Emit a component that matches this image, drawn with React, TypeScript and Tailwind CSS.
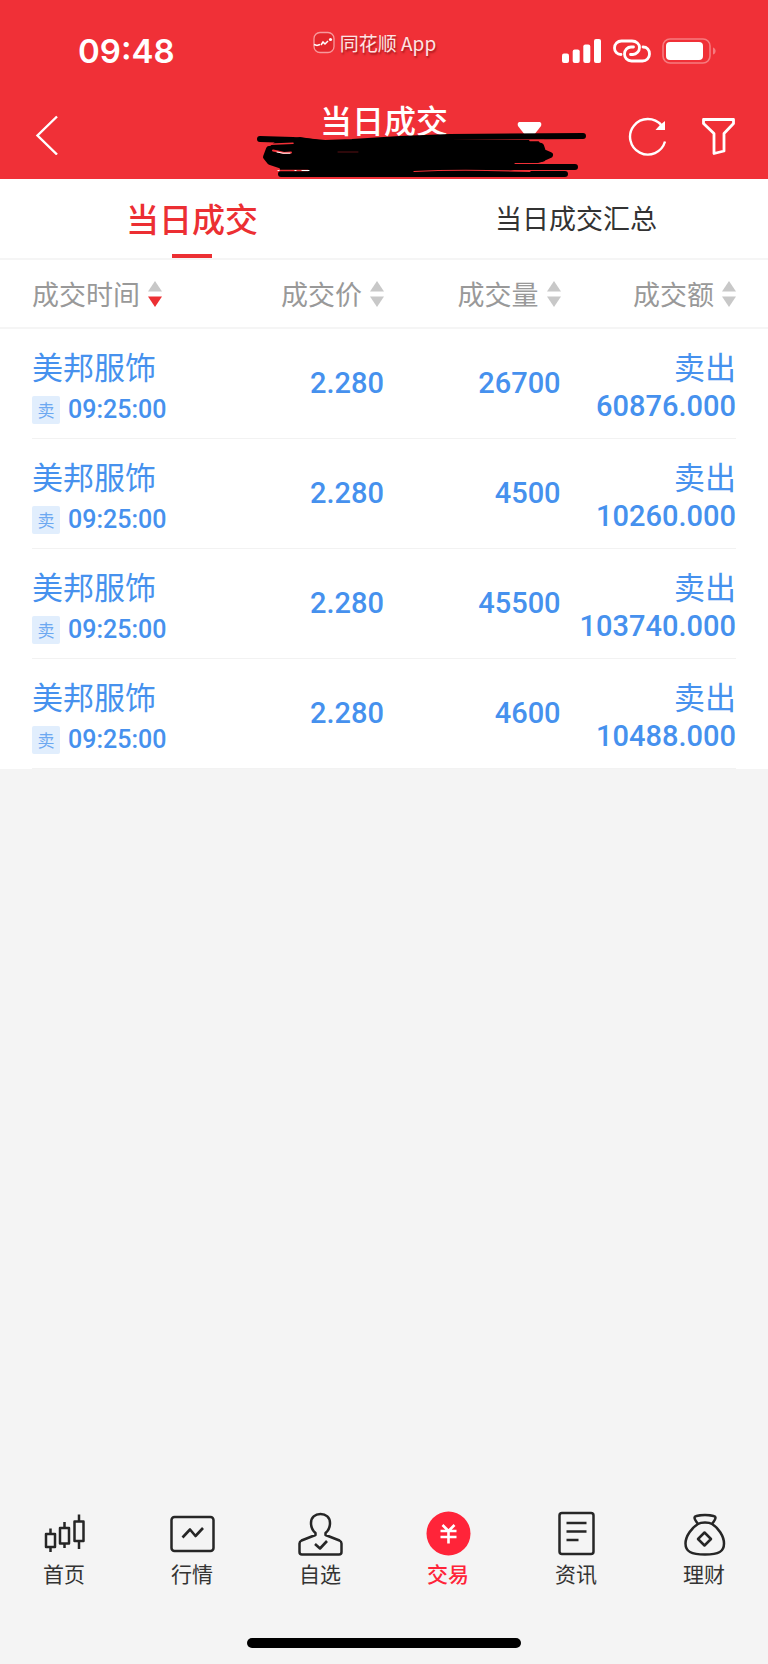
import type { ReactNode } from 'react'
import clsx from 'clsx'

type Trade = {
  id: number
  name: string
  time: string
  price: string
  volume: string
  amount: string
}

const trades: Trade[] = [
  { id: 1, name: '美邦服饰', time: '09:25:00', price: '2.280', volume: '26700', amount: '60876.000' },
  { id: 2, name: '美邦服饰', time: '09:25:00', price: '2.280', volume: '4500', amount: '10260.000' },
  { id: 3, name: '美邦服饰', time: '09:25:00', price: '2.280', volume: '45500', amount: '103740.000' },
  { id: 4, name: '美邦服饰', time: '09:25:00', price: '2.280', volume: '4600', amount: '10488.000' },
]

const columns = [
  { id: 'time', title: '成交时间', width: 'w-[27%]', sorted: true },
  { id: 'price', title: '成交价', width: 'w-[23%]', sorted: false },
  { id: 'volume', title: '成交量', width: 'w-[23%]', sorted: false },
  { id: 'amount', title: '成交额', width: 'w-[27%]', sorted: false },
]

function StatusBar() {
  return (
    <div className="grid grid-cols-3 h-24 pt-1.5 text-white">
      <div className="flex items-center pl-[78px] font-['Inter',sans-serif] text-[33px] font-semibold leading-10">
        09:48
      </div>

      <div className="flex items-start justify-center gap-1 pt-[25px] pr-5">
        <svg className="w-6 h-6" viewBox="0 0 24 24" fill="none">
          <rect x="2" y="1.500" width="20" height="20" rx="6" fill="#e3262c" stroke="#f7999c" strokeWidth="1.300" />
          <path d="M2 13.500l3 1 3-1M9 14l2-3 2 2 3-3" stroke="#fff" strokeWidth="1.500" />
          <circle cx="18.500" cy="8.500" r="1.600" fill="#fff" />
        </svg>
        <span className="text-[19px] leading-6 text-[#fde4e4] [text-shadow:1px_2px_2px_rgba(90,0,0,0.5)]">
          同花顺 App
        </span>
      </div>

      <div className="flex items-center justify-end gap-[11px] pr-[50px]">
        <svg className="w-10 h-6" viewBox="0 0 40 24" fill="#fff">
          <rect x="0" y="14.500" width="7" height="9.500" rx="2" />
          <rect x="10.700" y="10.500" width="7" height="13.500" rx="2" />
          <rect x="21.300" y="5.500" width="7" height="18.500" rx="2" />
          <rect x="32" y="0" width="7" height="24" rx="2" />
        </svg>
        <svg className="w-[38px] h-6" viewBox="0 0 38 24" fill="none" stroke="#fff" strokeWidth="2.800" strokeLinecap="round">
          <path d="M8 15.500C4 15.500 1.500 12.500 1.500 9C1.500 5 4.500 2 8.500 2H19C23.500 2 26.500 5 26.500 8.500C26.500 12 23.500 15.500 20 15.500H17.500" />
          <path d="M30 8C34 8 36.500 11 36.500 15C36.500 19 33.500 22 29.500 22H18.500C14 22 11.500 18.500 11.500 15C11.500 11 14.500 8 18 8H20.500" />
        </svg>
        <svg className="w-14 h-[26px]" viewBox="0 0 56 26" fill="none">
          <rect x="1" y="1" width="47" height="24" rx="7" stroke="#f67b7f" strokeWidth="1.600" />
          <rect x="4" y="4" width="37" height="18" rx="4" fill="#fff" />
          <path d="M51 9.500c3.500 1 3.500 6 0 7z" fill="#f67b7f" />
        </svg>
      </div>
    </div>
  )
}

// Account line under the title, blacked out by hand
function RedactedAccount() {
  return (
    <svg
      className="absolute bottom-0 left-1/2 w-[404px] h-[59px] -translate-x-1/2"
      viewBox="182 120 404 59"
      fill="none"
      strokeLinecap="round"
      strokeLinejoin="round"
    >
      <path d="M519 122h21q2 1 1 4l-7 9h-9l-7-9q-1-3 1-4z" fill="#fff" />
      <path d="M276 141 L300 137 L325 141 L400 140 L538 140 L543 148 L545 161 L500 174 L281 174 L279 165 L268 162 L266 157 L268 148z" fill="#000" />
      <g stroke="#000" strokeWidth="6">
        <path d="M260 139 L293 140 L325 143 L352 142 L400 139 L450 137 L583 136" />
        <path d="M300 147 L269 149 L266 157 L270 162 L285 167" />
        <path d="M530 144 L541 146 L543 152 L550 155 L541 159" />
        <path d="M281 174 L565 174" />
        <path d="M300 168 L400 167 L575 167" />
      </g>
      <path d="M270 144.200l23-1" stroke="#f03037" strokeWidth="1.600" />
      <path d="M273 150.500l5 1 6 1.500 7-.500" stroke="#f03037" strokeWidth="2" />
      <path d="M277 152l6 1.200h7" stroke="#fff" strokeWidth="1" />
      <path d="M278 170.500h30" stroke="#f03037" strokeWidth="1.400" />
      <path d="M278 170.500h1M295 170.500h1M302 170.500h7" stroke="#fff" strokeWidth="1.200" />
      <path d="M338 152h20" stroke="#5a1114" strokeWidth="1" />
      <path d="M414 171.500q45-2.500 116 0" stroke="#f03037" strokeWidth="1.200" />
      <path d="M515 163.500h32" stroke="#f03037" strokeWidth="1" />
      <path d="M530 140.500h14" stroke="#f03037" strokeWidth="1.600" />
    </svg>
  )
}

function Header() {
  return (
    <header className="relative bg-[#f03037]">
      <StatusBar />
      <div className="grid grid-cols-3 h-[83px] text-white">
        <div className="flex items-center pl-8 pb-1.5">
          <button type="button" aria-label="返回">
            <svg className="w-7 h-10" viewBox="0 0 28 40" fill="none" stroke="#fff" strokeWidth="2.400">
              <path d="M25 1.500L5.500 20.500L25 39.500" />
            </svg>
          </button>
        </div>
        <h1 className="text-center text-[32px] leading-[46px] font-medium">当日成交</h1>
        <div className="flex items-center justify-end gap-8 pr-8 pb-0.5">
          <button type="button" aria-label="刷新">
            <svg className="w-10 h-10" viewBox="0 0 40 40" fill="none" stroke="#fff" strokeWidth="2.400">
              <path d="M33.500 8.300A17.800 17.800 0 1 0 37 24.500" />
              <path d="M37 4v9h-9.500l4-4.500z" fill="#fff" stroke="none" />
            </svg>
          </button>
          <button type="button" aria-label="筛选">
            <svg className="w-9 h-10" viewBox="0 0 36 40" fill="none" stroke="#fff" strokeWidth="2.800" strokeLinejoin="round">
              <path d="M3.500 2.500h30v4L24 16.500V34l-10 2.500V16.500L3.500 6.500z" />
            </svg>
          </button>
        </div>
      </div>
      <RedactedAccount />
    </header>
  )
}

function Tabs() {
  return (
    <div className="grid grid-cols-2 h-[81px] bg-white border-b-2 border-[#f5f5f5]" role="tablist">
      <button type="button" role="tab" aria-selected="true" className="flex flex-col items-center text-[#ec2f33]">
        <span className="h-[75px] pt-[14px] text-[33px] leading-[50px] font-medium">当日成交</span>
        <span className="w-10 h-1 bg-[#ec2f33]" />
      </button>
      <button type="button" role="tab" aria-selected="false" className="text-[27px] text-[#333]">
        当日成交汇总
      </button>
    </div>
  )
}

function SortArrows({ sorted }: { sorted: boolean }) {
  return (
    <svg className="w-3.5 h-[26px]" viewBox="0 0 14 26">
      <path d="M7 0l7 10.500H0z" fill="#c8c8c8" />
      <path d="M0 15.500h14L7 26z" fill={sorted ? '#ec2f33' : '#c8c8c8'} />
    </svg>
  )
}

function TradeTable() {
  return (
    <table className="w-full table-fixed border-separate border-spacing-0 bg-white">
      <thead>
        <tr>
          {columns.map((column) => (
            <th
              key={column.id}
              scope="col"
              className={clsx(
                'h-[69px] p-0 border-b-2 border-[#f5f5f5] font-normal first:pl-8 last:pr-8',
                column.width
              )}
            >
              <button
                type="button"
                className={clsx(
                  'flex w-full items-center gap-2 whitespace-nowrap text-[27px] leading-10 text-[#999]',
                  !column.sorted && 'justify-end'
                )}
              >
                {column.title}
                <SortArrows sorted={column.sorted} />
              </button>
            </th>
          ))}
        </tr>
      </thead>
      <tbody className="text-[#4691ee]">
        {trades.map((trade) => (
          <tr key={trade.id}>
            <td className="p-0 pl-8">
              <div className="h-[110px] pt-[19px] border-b border-[#f2f2f2]">
                <div className="text-[31px] leading-9">{trade.name}</div>
                <div className="flex items-center gap-2 mt-3">
                  <span className="size-7 rounded-xs bg-[#e1eefd] text-center text-[17px] leading-7 text-[#6ca8f1]">
                    卖
                  </span>
                  <span className="font-['Roboto',sans-serif] text-[25px] leading-7 font-medium">{trade.time}</span>
                </div>
              </div>
            </td>
            <td className="p-0">
              <div className="flex h-[110px] items-center justify-end border-b border-[#f2f2f2] font-['Roboto',sans-serif] text-[29px] font-medium">
                {trade.price}
              </div>
            </td>
            <td className="p-0">
              <div className="flex h-[110px] items-center justify-end border-b border-[#f2f2f2] font-['Roboto',sans-serif] text-[29px] font-medium">
                {trade.volume}
              </div>
            </td>
            <td className="p-0 pr-8">
              <div className="h-[110px] pt-[19px] border-b border-[#f2f2f2] text-right">
                <div className="text-[31px] leading-9">卖出</div>
                <div className="font-['Roboto',sans-serif] text-[29px] leading-[44px] font-medium">{trade.amount}</div>
              </div>
            </td>
          </tr>
        ))}
      </tbody>
    </table>
  )
}

function NavIcon({ children }: { children: ReactNode }) {
  return (
    <svg
      className="size-12"
      viewBox="0 0 48 48"
      fill="none"
      stroke="#262626"
      strokeWidth="2.500"
      strokeLinejoin="round"
    >
      {children}
    </svg>
  )
}

const navItems = [
  {
    label: '首页',
    icon: (
      <>
        <path d="M6 24h9v13H6zM20 18h9v15.500h-9zM34.500 11.500h9v19.500h-9z" />
        <path d="M10.500 18.500V24M10.500 37v5M24.500 12v6M24.500 33.500V38M39 4.500v7M39 31v8" />
      </>
    ),
  },
  {
    label: '行情',
    icon: (
      <>
        <rect x="3.500" y="7" width="42" height="34" rx="3" />
        <path d="M14.500 27.500l7.500-8 5.500 6.500 7.500-8" strokeWidth="2.600" />
      </>
    ),
  },
  {
    label: '自选',
    icon: (
      <>
        <path d="M19.500 25V23C16.500 20.500 15 17 15 13C15 7.500 19 4 24.500 4S34 7.500 34 13C34 17 32.500 20.500 29.500 23V25L43.500 30.500Q45.500 31.500 45.500 33.500V42Q45.500 44.500 43 44.500H6Q3.500 44.500 3.500 42V33.500Q3.500 31.500 5.500 30.500Z" />
        <path d="M19 34l5 4.500 7-7.500" strokeWidth="2.600" />
      </>
    ),
  },
  {
    label: '交易',
    active: true,
    icon: (
      <>
        <circle cx="24.500" cy="23.500" r="22" fill="#ff2439" stroke="none" />
        <path d="M18.500 15l6 6 6-6M16.500 21h16M16.500 27h16M24.500 21v12.500" stroke="#fff" strokeWidth="2.600" />
      </>
    ),
  },
  {
    label: '资讯',
    icon: (
      <>
        <rect x="7.500" y="3" width="34" height="41" rx="2.500" />
        <path d="M14.500 13h20M14.500 21.500h20M14.500 30h12" strokeWidth="2.600" />
      </>
    ),
  },
  {
    label: '理财',
    icon: (
      <>
        <path d="M18 14C16 11.500 14.500 9 14.500 7.500C14.500 6 20 5 25 5S35.500 6 35.500 7.500C35.500 9 34 11.500 32 14" />
        <path d="M18 14C21 12 29 12 32 14C38 17.500 44 26 44 33.500C44 41.500 39 44.500 25 44.500S5.500 41.500 5.500 33.500C5.500 26 12 17.500 18 14Z" />
        <path d="M24.500 22.500l6.500 6.500-6.500 6.500-6.500-6.500z" />
      </>
    ),
  },
]

function BottomNav() {
  return (
    <nav className="grid grid-cols-6 h-[154px] bg-[#f4f4f4]">
      {navItems.map((item) => (
        <a
          key={item.label}
          href="#"
          className={clsx(
            'flex flex-col items-center text-[21px] leading-[30px]',
            item.active ? 'text-[#ff2439] font-medium' : 'text-[#333]'
          )}
        >
          <NavIcon>{item.icon}</NavIcon>
          {item.label}
        </a>
      ))}
    </nav>
  )
}

export default function App() {
  return (
    <div className="flex min-h-screen flex-col bg-[#f4f4f4] font-['Noto_Sans_CJK_SC',sans-serif]">
      <Header />
      <Tabs />
      <TradeTable />
      <div className="flex-1" />
      <footer>
        <BottomNav />
        <div className="mx-auto mt-[-26px] mb-4 h-2.5 w-[274px] rounded-full bg-black" />
      </footer>
    </div>
  )
}
